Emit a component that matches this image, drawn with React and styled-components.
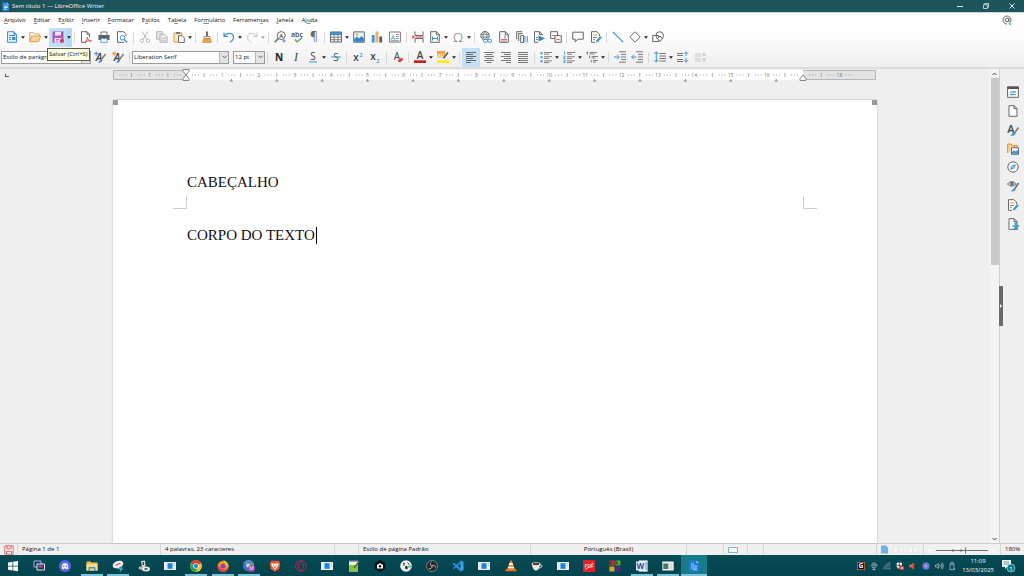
import React from "react";
import styled, { createGlobalStyle } from "styled-components";

const GlobalStyle = createGlobalStyle`
  * {
    box-sizing: border-box;
  }

  body {
    margin: 0;
    overflow: hidden;
    font-family: "Open Sans", "Noto Sans", sans-serif;
    font-size: 6px;
    color: #111;
  }

  button, select {
    font: inherit;
    color: inherit;
    margin: 0;
    padding: 0;
    border: 0;
    background: none;
  }

  svg {
    flex: none;
    overflow: visible;
  }
`;

const Window = styled.div`
  display: flex;
  flex-direction: column;
  height: 100vh;
  background: #efefef;
`;

/* ---------- title bar and menu ---------- */

const TitleBar = styled.header`
  display: flex;
  align-items: center;
  height: 12px;
  flex: none;
  padding-left: 1px;
  gap: 2px;
  background: #1d545c;
  color: #f0f6f6;
`;

const Title = styled.h1`
  flex: 1;
  margin: 0;
  font-size: 6px;
  line-height: 12px;
  font-weight: 400;
`;

const WindowButton = styled.button`
  display: flex;
  align-items: center;
  justify-content: center;
  width: 24px;
  height: 12px;
`;

const Chrome = styled.div`
  flex: none;
  background: linear-gradient(#ffffff 0, #fdfdfd 40%, #efefef 100%);
  border-top: 1px solid #c9d8da;
  border-bottom: 2px solid #dcdcdc;
`;

const MenuBar = styled.nav`
  display: flex;
  align-items: center;
  gap: 8px;
  height: 14px;
  padding: 0 12px 0 4px;
`;

const MenuItem = styled.button`
  line-height: 12px;
  white-space: nowrap;

  u {
    text-underline-offset: 1px;
    text-decoration-thickness: 1px;
    text-decoration-color: #888;
  }
`;

const UpdateButton = styled.button`
  display: flex;
  margin-left: auto;
`;

/* ---------- toolbars ---------- */

const ToolBar = styled.div`
  display: flex;
  align-items: center;
  height: ${(props) => props.$height}px;
  padding-left: ${(props) => props.$start}px;
`;

const ToolButton = styled.button`
  position: relative;
  display: flex;
  align-items: center;
  justify-content: center;
  flex: none;
  width: ${(props) => (props.$wide ? 18 : 17)}px;
  height: 19px;
  background: ${(props) => (props.$active ? "#c3dff6" : "none")};
`;

const DropButton = styled.button`
  display: flex;
  align-items: center;
  justify-content: center;
  flex: none;
  width: 6px;
  height: 19px;
  background: ${(props) => (props.$active ? "#b5d9f6" : "none")};
  opacity: ${(props) => (props.$off ? 0.4 : 1)};
`;

const Separator = styled.span`
  flex: none;
  width: 5px;
  height: 11px;
  background: linear-gradient(#d8d8d8, #d8d8d8) center / 1px 100% no-repeat;
`;

const Tooltip = styled.span`
  position: absolute;
  top: 20px;
  left: -2px;
  z-index: 2;
  height: 13px;
  padding: 0 1px;
  border: 1px solid #5a5a4c;
  background: #ffffe1;
  line-height: 11px;
  white-space: nowrap;
`;

const Combo = styled.label`
  position: relative;
  display: flex;
  flex: none;
  width: ${(props) => props.$width}px;
  height: 13px;
  margin-right: ${(props) => props.$gap || 0}px;
  border: 1px solid #9b9b9b;
  background: #fff;

  select {
    flex: 1;
    min-width: 0;
    appearance: none;
    padding-left: 1px;
    line-height: 11px;
    outline: none;
  }
`;

const ComboArrow = styled.span`
  display: flex;
  align-items: center;
  justify-content: center;
  width: 9px;
  border-left: 1px solid #b4b4b4;
  background: #e4e4e4;
`;

/* ---------- document area ---------- */

const Work = styled.div`
  display: flex;
  flex: 1;
  min-height: 0;
`;

const DocumentColumn = styled.main`
  position: relative;
  display: flex;
  flex: 1;
  flex-direction: column;
  align-items: center;
  min-width: 0;
`;

const TabCorner = styled.span`
  position: absolute;
  top: 5px;
  left: 5px;
  width: 4px;
  height: 3px;
  border-left: 1px solid #555;
  border-bottom: 1px solid #555;
`;

const Page = styled.article`
  position: relative;
  flex: 1;
  width: 764px;
  max-width: 100%;
  margin-top: 18px;
  padding: 73px 60px 0;
  background: #fff;
  box-shadow: 0 0 2px #b5b5b5;
  color: #111;
  font-family: "Liberation Serif", serif;
  font-size: 15px;
  line-height: 18px;
`;

const PageHandle = styled.span`
  position: absolute;
  top: 0;
  ${(props) => props.$side}: 0;
  width: 5px;
  height: 5px;
  background: #999;
`;

const Paragraph = styled.p`
  margin: 0;
  padding: 0 14px;
`;

const HeaderMarks = styled.div`
  display: flex;
  justify-content: space-between;
  margin: 5px 0 17px;
`;

const CornerMark = styled.span`
  width: 14px;
  height: 13px;
  border-bottom: 1px solid #cfcfcf;
  border-${(props) => props.$edge}: 1px solid #cfcfcf;
`;

const Caret = styled.span`
  display: inline-block;
  width: 1px;
  height: 17px;
  margin-left: 1px;
  background: #000;
  vertical-align: -4px;
`;

const ScrollBar = styled.div`
  display: flex;
  flex-direction: column;
  align-items: center;
  width: 9px;
  background: #f4f4f4;

  button {
    display: flex;
    align-items: center;
    justify-content: center;
    height: 9px;
  }
`;

const ScrollTrack = styled.div`
  flex: 1;
  width: 100%;
`;

const ScrollThumb = styled.div`
  height: 41%;
  margin-left: 1px;
  background: #c9c9c9;
`;

const SideBar = styled.aside`
  position: relative;
  display: flex;
  flex-direction: column;
  align-items: center;
  width: 25px;
  padding: 14px 0 0 2px;
  border-left: 1px solid #cfcfcf;
`;

const SideButton = styled.button`
  display: flex;
  align-items: center;
  justify-content: center;
  width: 19px;
  flex: 0 1 19px;
`;

const SideDeck = styled.div`
  display: flex;
  flex-direction: column;
  height: 150px;
`;

const SideHandle = styled.button`
  position: absolute;
  top: calc(50% - 20px);
  left: -1px;
  width: 4px;
  height: 40px;
  background: #6a6a6a;

  svg {
    display: block;
  }
`;

/* ---------- status bar ---------- */

const StatusBar = styled.footer`
  display: flex;
  flex: none;
  height: 12px;
  border-top: 1px solid #cdcdcd;
  background: #f0f0f0;
  line-height: 11px;
`;

const StatusCell = styled.div`
  display: flex;
  align-items: center;
  justify-content: ${(props) => (props.$center ? "center" : "flex-start")};
  flex: ${(props) => (props.$grow ? "1 1" : "0 1")} ${(props) => props.$width}px;
  min-width: 0;
  padding-left: ${(props) => (props.$center ? 0 : 4)}px;
  border-right: 1px solid #d6d6d6;
  white-space: nowrap;

  &:last-child {
    border-right: 0;
  }
`;

/* ---------- taskbar ---------- */

const TaskBar = styled.div`
  display: flex;
  flex: none;
  justify-content: space-between;
  height: 21px;
  background: linear-gradient(#064b54, #03434e);
  color: #f4fafa;
`;

const Apps = styled.div`
  display: flex;
  flex: 0 1 707px;
`;

const AppButton = styled.button`
  display: flex;
  flex: 1;
  align-items: center;
  justify-content: center;
  background-color: ${(props) => (props.$active ? "#177c8a" : "transparent")};
  background-image: ${(props) =>
    props.$open ? "linear-gradient(#79c3d4, #79c3d4)" : "none"};
  background-position: bottom;
  background-size: ${(props) => (props.$active ? "100%" : "22px")} 2px;
  background-repeat: no-repeat;
`;

const Tray = styled.div`
  display: flex;
  align-items: center;
  padding-right: 9px;
`;

const TrayButton = styled.button`
  display: flex;
  align-items: center;
  justify-content: center;
  width: 13px;
`;

const Clock = styled.time`
  margin: 0 8px 0 4px;
  text-align: center;
  line-height: 9px;
`;

/* ---------- drawings ---------- */

const Icon = ({ size = 12, children }) => (
  <svg
    width={size}
    height={size}
    viewBox="0 0 12 12"
    fill="none"
    stroke="#666"
    aria-hidden="true"
  >
    {children}
  </svg>
);

const Letter = ({ x = 6, y = 10, size = 11, color = "#444", children, ...props }) => (
  <text x={x} y={y} fontSize={size} fill={color} stroke="none" textAnchor="middle" {...props}>
    {children}
  </text>
);

const BLUE = "#3a94d6";

const icons = {
  writer: (
    <g stroke="none">
      <path d="M2 .5h6l2.500 2.500v8.500H2z" fill="#2f8fe0" />
      <path d="M8 .5v2.500h2.500z" fill="#a8d5fa" />
      <path d="M4 5h5v1H4zM4 7h5v1H4zM4 9h3v1H4z" fill="#fff" />
    </g>
  ),
  newDoc: (
    <>
      <path d="M1.500 .7h6.300l2.700 2.700v7.900h-9z" fill="#e3f1fc" stroke={BLUE} />
      <path d="M3 4.500h6M3 6.500h2M3 8.500h2" stroke={BLUE} />
      <path d="M7.500 .7v3h3zM6 6h3.500v3H6z" fill={BLUE} stroke="none" />
    </>
  ),
  open: (
    <>
      <path d="M.7 10.500V1.700h3.600l1 1.300h5v2" stroke="#e3a14f" />
      <path d="M.7 10.700l2-5.700h9l-2 5.700z" fill="#fbd597" stroke="#e3a14f" />
    </>
  ),
  save: (
    <>
      <path d="M.5 .5h11v11H.5z" fill="#ab5bb6" stroke="none" />
      <path d="M3 1h6v3.500H3zM2.500 7h7v4.500h-7z" fill="#f3e6f5" stroke="none" />
      <path d="M4 8.500h3M4 10h2" stroke="#ab5bb6" strokeWidth=".8" />
      <circle cx="9.800" cy="9.800" r="2.100" fill="#e0355c" stroke="none" />
    </>
  ),
  pdf: (
    <>
      <path d="M9.500 6V3.200L7 .7H1.500v10.600H6" fill="#fff" />
      <path d="M7 .7v2.600h2.500" />
      <path d="M4.500 11.300c2-1 3-3 3-5.300 0 3 1.500 4 4 4-3-.5-5 0-7 1.300z" stroke="#e05256" />
    </>
  ),
  print: (
    <>
      <path d="M3 4V1h6v3" fill="#fff" stroke="#777" />
      <path d="M.5 4h11v5H.5z" fill="#5d6166" stroke="none" />
      <path d="M2.800 7.500h6.400v3.800H2.800z" fill="#fff" stroke={BLUE} strokeWidth=".8" />
    </>
  ),
  preview: (
    <>
      <path d="M10 5V3.200L7.500 .7h-6v10.600H8" fill="#fff" />
      <circle cx="6.500" cy="6.700" r="2.300" stroke={BLUE} />
      <path d="M8.200 8.500l3 3" stroke={BLUE} strokeWidth="1.400" />
    </>
  ),
  cut: (
    <g stroke="#b9b9b9">
      <path d="M3 .5l5 8M9 .5l-5 8" />
      <circle cx="3" cy="9.700" r="1.600" />
      <circle cx="9" cy="9.700" r="1.600" />
    </g>
  ),
  copy: (
    <g stroke="#b3b3b3" fill="#e9e9e9">
      <path d="M.7 .7h5.500v7.500H.7z" />
      <path d="M4 3.200h4.500l2.600 2.600v5.500H4z" />
      <path d="M5.500 7.500h4M5.500 9.500h4" strokeWidth=".7" />
    </g>
  ),
  paste: (
    <>
      <path d="M6 11H1V2h8v2" stroke="#e0953c" fill="#fdeacb" />
      <path d="M3 1h4v2H3z" fill="#777" stroke="none" />
      <path d="M5.500 4.700h3.600l2.200 2.200v4.500H5.500z" fill="#fff" />
    </>
  ),
  brush: (
    <>
      <path d="M6 .5v5" stroke="#7b6a5a" strokeWidth="2" />
      <path d="M3 5.500h6v2H3z" fill="#fff" stroke="#a58a6c" />
      <path d="M2.500 8h7l1 3.500h-9z" fill="#f0a04b" stroke="#d98e3e" strokeWidth=".7" />
    </>
  ),
  undo: <path d="M1 1.500v4h4M1.300 5.300C4 1 10.500 1.500 10.500 6.300c0 2.500-1.700 4-3.700 5" stroke={BLUE} strokeWidth="1.200" />,
  redo: <path d="M11 1.500v4H7M10.700 5.300C8 1 1.500 1.500 1.500 6.300c0 2.500 1.700 4 3.700 5" stroke="#c4c4c4" />,
  find: (
    <>
      <circle cx="7.200" cy="4.600" r="4" />
      <path d="M4.500 7.300L.8 11.200" strokeWidth="1.500" />
      <Letter x={7.2} y={6.800} size={6} fontWeight="600">A</Letter>
      <path d="M8.300 10h3.500M10 8.500v3" stroke={BLUE} />
    </>
  ),
  spell: (
    <>
      <Letter y={5.500} size={7} fontWeight="600">abc</Letter>
      <path d="M4 8.500l2.200 2.500L11 6.500" stroke="#3fa45b" strokeWidth="1.200" />
    </>
  ),
  pilcrow: <Letter size={12} color="#6a6a6a">¶</Letter>,
  table: (
    <>
      <path d="M.5 1h11v10H.5z" fill="#fff" stroke="#5d6770" />
      <path d="M.5 1h11v2.500H.5z" fill={BLUE} stroke="none" />
      <path d="M.5 3.700h11M.5 6.200h11M.5 8.700h11M4.200 3.500V11M7.900 3.500V11" stroke="#5d6770" strokeWidth=".8" />
    </>
  ),
  image: (
    <>
      <path d="M.7 .9h10.600v10.300H.7z" fill="#eaf4fc" stroke="#5b6873" />
      <path d="M1.200 10.700V8L4 5.500l2 2L8.500 5l2.300 2.500v3.200z" fill="#3286c4" stroke="none" />
      <circle cx="4" cy="3.600" r="1.200" fill="#f0a04b" stroke="none" />
    </>
  ),
  chart: (
    <g stroke="none">
      <path d="M.8 4h2.800v7.500H.8z" fill={BLUE} />
      <path d="M4.500 .5h2.800v11H4.500z" fill="#f3b24f" />
      <path d="M8.300 5.500h2.800v6H8.300z" fill="#5a5f63" />
    </g>
  ),
  textBox: (
    <>
      <path d="M.6 1h10.800v10H.6z" fill="#fff" stroke="#777" />
      <Letter x={4} y={8.500} size={7} color={BLUE}>A</Letter>
      <path d="M7 3.500h3M7 5.500h3M7 7.500h3M2 9.700h8" strokeWidth=".7" />
    </>
  ),
  pageBreak: (
    <>
      <path d="M3 .5v4h8V.5M3 11.500v-4h8v4" />
      <path d="M3.500 6H12M0 6h2" stroke="#d8484c" />
      <path d="M.5 4l2.500 2-2.500 2z" fill="#d8484c" stroke="none" />
    </>
  ),
  field: (
    <>
      <path d="M1.700 .7h5.800l2.800 2.800v7.800H1.700z" fill="#fff" />
      <path d="M7.300 .7v3h3" />
      <path d="M3.500 5.500v4M8.500 5.500v4M3.500 7.500h5" stroke={BLUE} />
    </>
  ),
  omega: <Letter y={10.500} size={13} color="#6a6a6a" fontWeight="300">Ω</Letter>,
  link: (
    <>
      <circle cx="5" cy="4.700" r="4.200" />
      <path d="M.8 3.300h8.400M.8 6h8.400M5 .5c-2.500 2.500-2.500 6 0 8.400M5 .5c2.500 2.500 2.500 6 0 8.400" strokeWidth=".8" />
      <rect x="3.500" y="8.300" width="4" height="3" rx="1.500" stroke={BLUE} fill="#fff" />
      <rect x="7.700" y="8.300" width="4" height="3" rx="1.500" stroke={BLUE} fill="#fff" />
    </>
  ),
  footnote: (
    <>
      <path d="M1.700 .7h5.800l2.800 2.800v7.800H1.700z" fill="#fff" />
      <path d="M7.300 .7v3h3M7 4.500v3" />
      <path d="M3 8.500h6M3 10h6" stroke="#e06a6d" />
    </>
  ),
  endnote: (
    <>
      <path d="M.7 8.500V.7h5.500M2.700 10V2.500h4" />
      <path d="M4.700 4.500h2.800v7H4.700z" fill="#fff" />
      <path d="M9 5v6.500M11.300 5v6.500" stroke={BLUE} />
    </>
  ),
  bookmark: (
    <>
      <path d="M9.300 4V3.500L6.500 .7H1.500v10.600H5M6.500 .7v3h3" fill="#fff" />
      <path d="M5.500 4.500l6.500 3-6.500 3z" fill="#2f87c8" stroke="none" />
      <path d="M3 6.500h2M3 8.500h2" strokeWidth=".8" />
    </>
  ),
  crossRef: (
    <>
      <path d="M.7 .7h6.800v6.800H.7z" fill="#fff" />
      <path d="M5 4.700h6.300v6.600H5z" fill="#fff" />
      <path d="M2 4.500h4M6.500 8.500h3.300" stroke="#e06a6d" />
    </>
  ),
  comment: <path d="M.7 1.200h10.600v7H5.700L3.200 11V8.200H.7z" fill="#fff" />,
  track: (
    <>
      <path d="M9.500 5V3.200L7 .7H1.500v10.600H5" fill="#fff" />
      <path d="M3 4h4.500" stroke="#e0953c" />
      <path d="M3 6.500h4M3 8.700h2" strokeWidth=".8" />
      <path d="M6 11.500l.6-2.400L10.200 5l1.600 1.500-3.600 4.300z" fill={BLUE} stroke="none" />
    </>
  ),
  line: <path d="M.8 .8l10.400 10.400" stroke={BLUE} strokeWidth="1.200" />,
  diamond: <path d="M6 .8L11.200 6 6 11.200.8 6z" fill="#fff" />,
  shapes: (
    <>
      <path d="M.7 4.500h5.800v6H.7z" fill="#fff" />
      <circle cx="7.700" cy="4.500" r="3.800" />
      <path d="M5.500 7.700L8 5l2.500 2.700L8 10.500z" fill="#fff" />
    </>
  ),
  newStyle: (
    <>
      <Letter x={5} y={10} size={11} fontWeight="600" fontStyle="italic">A</Letter>
      <path d="M11.500 3L7.500 8.500" stroke="#777" strokeWidth="1.400" />
      <path d="M4 11.500c2 .5 4-.3 4.200-2L6.500 8.500z" fill={BLUE} stroke="none" />
      <path d="M0 2.500h4.500M2.200 .3v4.500" stroke={BLUE} />
    </>
  ),
  editStyle: (
    <>
      <Letter x={5} y={10} size={11} fontWeight="600" fontStyle="italic">A</Letter>
      <path d="M11.500 3L7.500 8.500" stroke="#777" strokeWidth="1.400" />
      <path d="M4 11.500c2 .5 4-.3 4.200-2L6.500 8.500z" fill={BLUE} stroke="none" />
      <path d="M0 2.500h4.400M2.200 .3v4.400M.7 1l3 3M3.700 1l-3 3" stroke="#f0933a" strokeWidth=".8" />
    </>
  ),
  bold: <Letter size={10} fontWeight="700" color="#222">N</Letter>,
  italic: <Letter fontFamily="Liberation Serif" fontStyle="italic" size={12}>I</Letter>,
  underline: (
    <>
      <Letter y={9} size={10}>S</Letter>
      <path d="M2 11h8" stroke={BLUE} />
    </>
  ),
  strike: (
    <>
      <Letter y={9.500} size={10}>S</Letter>
      <path d="M1 6h10" stroke={BLUE} />
    </>
  ),
  superscript: (
    <>
      <Letter x={4} size={10} fontWeight="600">x</Letter>
      <Letter x={9} y={6} size={6} color={BLUE} fontWeight="600">2</Letter>
    </>
  ),
  subscript: (
    <>
      <Letter x={4} y={9} size={10} fontWeight="600">x</Letter>
      <Letter x={9} y={11.500} size={6} color={BLUE} fontWeight="600">2</Letter>
    </>
  ),
  clear: (
    <>
      <Letter x={5} y={9} size={10}>A</Letter>
      <path d="M5.500 10l4-3.500 2 2-3.700 3z" fill="#dc3b4a" stroke="none" />
    </>
  ),
  fontColor: (
    <>
      <Letter y={8} size={10} fontWeight="600">A</Letter>
      <path d="M0 9.300h12v2.700H0z" fill="#c9211e" stroke="none" />
    </>
  ),
  highlight: (
    <>
      <path d="M0 0h8v6.500H0z" fill="#f7a13b" stroke="none" />
      <Letter x={4} y={5.500} size={6} color="#fff">ab</Letter>
      <path d="M11 1.500L6.500 7.300" stroke="#5a5a5a" strokeWidth="1.600" />
      <path d="M0 9.300h12v2.700H0z" fill="#ffee00" stroke="none" />
    </>
  ),
  alignLeft: <path d="M1 1.500h10M1 3.500h7M1 5.500h10M1 7.500h7M1 9.500h10M1 11.500h5" stroke="#585858" strokeWidth=".9" />,
  alignCenter: <path d="M1 1.500h10M2.500 3.500h7M1 5.500h10M2.500 7.500h7M1 9.500h10M3.500 11.500h5" stroke="#6a6a6a" strokeWidth=".9" />,
  alignRight: <path d="M1 1.500h10M4 3.500h7M1 5.500h10M4 7.500h7M1 9.500h10M6 11.500h5" stroke="#6a6a6a" strokeWidth=".9" />,
  justify: <path d="M1 1.500h10M1 3.500h10M1 5.500h10M1 7.500h10M1 9.500h10M1 11.500h10" stroke="#6a6a6a" strokeWidth=".9" />,
  bullets: (
    <>
      <path d="M4 1.500h8M4 3.200h5M4 5.700h8M4 7.400h5M4 9.900h8M4 11.600h5" strokeWidth=".8" />
      <path d="M.5 1.300h2v2h-2zM.5 5.300h2v2h-2zM.5 9.300h2v2h-2z" fill={BLUE} stroke="none" />
    </>
  ),
  numbering: (
    <>
      <path d="M4 1.500h8M4 3.200h5M4 5.700h8M4 7.400h5M4 9.900h8M4 11.600h5" strokeWidth=".8" />
      <path d="M1.500 .5v3M.5 5h1.500v1.300H.7v1.200h1.600M.5 9h1.600v2.500H.5M.5 10.200h1.500" stroke={BLUE} strokeWidth=".8" />
    </>
  ),
  outline: (
    <>
      <path d="M3.500 1.500H11M5.500 5.500H12M7 9.500h5M3.500 3h5M5.500 7h4M7 11h3" strokeWidth=".8" />
      <path d="M1.500 .5v3M.5 1.500h1M3.500 4.500v3M5.200 9v2.500" stroke={BLUE} />
    </>
  ),
  indent: (
    <>
      <path d="M5 .8h7M7 3.400h5M7 6h5M7 8.600h5M5 11.200h7" strokeWidth=".9" />
      <path d="M0 6h5M3 3.700L5.300 6 3 8.300" stroke={BLUE} />
    </>
  ),
  outdent: (
    <>
      <path d="M5 .8h7M7 3.400h5M7 6h5M7 8.600h5M5 11.200h7" strokeWidth=".9" />
      <path d="M.5 6h5M3 3.700L.7 6 3 8.300" stroke={BLUE} />
    </>
  ),
  lineSpacing: (
    <>
      <path d="M5.500 2.500H12M5.500 5H12M5.500 7.500H12M5.500 10H12" strokeWidth=".9" />
      <path d="M2.300 .8v10.400M.3 3l2-2.200 2 2.200M.3 9l2 2.200 2-2.200" stroke={BLUE} />
    </>
  ),
  spaceMore: (
    <>
      <path d="M0 2.500h6M0 4.500h6M0 8.500h6M0 10.500h6" strokeWidth=".9" />
      <path d="M9 .8V5M7 2.800l2-2 2 2M9 7v4.200M7 9.200l2 2 2-2" stroke={BLUE} />
    </>
  ),
  spaceLess: (
    <g stroke="#c4c4c4">
      <path d="M0 3h6M0 5h6M0 8h6M0 10h6" strokeWidth=".9" />
      <path d="M9 .8V5M7 3l2 2 2-2M9 7v4.200M7 9l2-2 2 2" />
    </g>
  ),
  properties: (
    <>
      <path d="M.6 1h10.800v10.300H.6z" fill="#fff" />
      <path d="M.2 .5h11.600V3H.2z" fill="#555" stroke="none" />
      <path d="M3 6h6M3 8.500h6" stroke={BLUE} />
      <path d="M7 5v2M5 7.500v2" stroke={BLUE} />
    </>
  ),
  pageDeck: <path d="M2 .7h5.200L10 3.500v7.800H2zM7 .7v3h3" fill="#fff" />,
  styles: (
    <>
      <Letter x={4} y={9} size={11} fontWeight="600">A</Letter>
      <path d="M11.500 3.500L8 8.500" stroke="#777" strokeWidth="1.600" />
      <path d="M3.500 11.500c3 .8 5-.5 5.200-2.500L7 7.800z" fill={BLUE} stroke="none" />
    </>
  ),
  gallery: (
    <>
      <path d="M.7 10V1h3.500l1 1.500h5V4" stroke="#e8862e" fill="#fbd597" />
      <path d="M4.500 4.700h7v6.600h-7z" fill="#fff" stroke="#5b6873" />
      <path d="M5 10.800V9l2-1.700 1.500 1.200L10 7.300l1 1v2.500z" fill={BLUE} stroke="none" />
    </>
  ),
  navigator: (
    <>
      <circle cx="6" cy="6" r="5.200" fill="#fff" />
      <path d="M9 3L7.300 7.300 3 9l1.700-4.300z" fill={BLUE} stroke="none" />
      <circle cx="6" cy="6" r=".8" fill="#fff" stroke="none" />
    </>
  ),
  inspector: (
    <>
      <path d="M.5 4c2-3 6.500-3 8.500 0-2 2.700-6.500 2.700-8.500 0z" />
      <circle cx="4.800" cy="3.800" r="1.500" fill={BLUE} />
      <path d="M11.500 3L8 8.500" strokeWidth="1.500" />
      <path d="M4 11.300c2.500.8 4.500-.5 4.700-2.300L7.200 8z" fill={BLUE} stroke="none" />
    </>
  ),
  accessibility: (
    <>
      <path d="M2 .7h5.200L10 3.500v7.800H2zM7 .7v3h3" fill="#fff" />
      <circle cx="8.700" cy="5.700" r="1.300" fill={BLUE} stroke="none" />
      <path d="M5.500 8h6.500M8.700 8v1.500M8.700 9l-2 2.700M8.700 9l2 2.700" stroke={BLUE} strokeWidth="1.400" />
    </>
  ),
  update: (
    <>
      <circle cx="6" cy="6" r="2.200" strokeWidth="1.200" />
      <path d="M8.200 3.500v3.700c.3 1.500 2.500 1.300 2.600-1.200C10.700 3 8.500 1.200 6 1.200S1.200 3.300 1.200 6s2 4.800 4.800 4.800" strokeWidth="1.200" />
      <path d="M9.500 8v3.500M8 10l1.500 1.700L11 10" stroke={BLUE} />
    </>
  ),
  docModified: (
    <path d="M1 1h10v10H1zM3.500 1v3.500h5V1M3 11V7.500h6V11" stroke="#d8484c" fill="#fff" />
  ),
};

const apps = [
  { name: "Iniciar", art: <path d="M1 2.500l4.500-.7v4H1zM6.200 1.700L11 1v4.800H6.200zM1 6.500h4.500v4L1 9.800zM6.200 6.500H11v4.800l-4.800-.7z" fill="#fff" /> },
  { name: "Área de trabalho", art: (<><path d="M1 1h7v6H1z" fill="none" stroke="#b8a6e8" /><path d="M4 4h7.500v6H4z" fill="#1d2e63" stroke="#e2e6f5" /><path d="M5.500 5.500h4v2h-4z" fill="#d74a6c" /></>) },
  { name: "Discord", art: (<><circle cx="6" cy="6" r="6" fill="#5865f2" /><path d="M2.700 8.500c0-2 .5-4 1.300-5 1.300-.5 2.700-.5 4 0 .8 1 1.300 3 1.300 5-1 .7-1.500.8-2 .7L6.700 8.500H5.300l-.6.7c-.5.100-1 0-2-.7z" fill="#fff" /><circle cx="4.700" cy="6.400" r=".8" fill="#5865f2" /><circle cx="7.300" cy="6.400" r=".8" fill="#5865f2" /></>) },
  { name: "Explorador", open: true, art: (<><path d="M.5 1.500h4l1 1h6v8H.5z" fill="#f3c044" /><path d="M.5 4h11v6.500H.5z" fill="#fbdc7c" /><path d="M2.500 11V7h7v4H8V8.500H4V11z" fill="#3d94d8" /></>) },
  { name: "Ferramenta de captura", open: true, art: (<><ellipse cx="6" cy="4.500" rx="5.500" ry="3.500" transform="rotate(-20 6 4.500)" fill="#eef0f2" /><path d="M3.500 5.500l5-2.500" stroke="#d64545" strokeWidth="1.200" /><path d="M5 8l6 1.500M8 11.500l2-5" stroke="#67a9dc" strokeWidth="1.200" /></>) },
  { name: "Gravador", art: (<><path d="M3 1l4-.5.5 6L4 7z" fill="#d5d8da" /><path d="M4.500 2h1.500v3H4.500z" fill="#444" /><ellipse cx="3.500" cy="8" rx="3" ry="1.700" fill="#aeb5b8" /><ellipse cx="8" cy="9" rx="4" ry="2.500" fill="#e6e8e9" /><ellipse cx="8" cy="9" rx="1.700" ry=".9" fill="#555" /></>) },
  { name: "Painel", art: "panel" },
  { name: "Chrome", open: true, art: "chrome" },
  { name: "Firefox", open: true, art: (<><circle cx="6" cy="6.300" r="5.500" fill="#ff8a1f" /><path d="M6.500 .3c3 1 5.500 4 5 7-1-2-2-2.500-3-4-1-1-2-1.500-2-3z" fill="#ffcf33" /><path d="M.8 4C0 8 2.500 12 6.300 11.800 9 11.500 11 10 11.500 7.500 9 11 3 10.500.8 4z" fill="#f5345d" /><circle cx="6" cy="6.300" r="2.300" fill="#7b3fd6" /></>) },
  { name: "Chrome, perfil M", open: true, art: "chromeM" },
  { name: "Brave", art: (<><path d="M2.500 .7h7L11.300 3l-1 6L6 11.800 1.700 9l-1-6z" fill="#fb542b" /><path d="M3 3.200l3 .6 3-.6.8 1.500-2 3L6 9.500 4.200 7.700l-2-3z" fill="#fff" /><path d="M4.500 5l1.500 3 1.500-3" stroke="#fb542b" fill="none" strokeWidth=".8" /></>) },
  { name: "Opera GX", art: (<g fill="none" stroke="#b3284d"><circle cx="6" cy="6" r="5.300" /><ellipse cx="6" cy="6" rx="2.300" ry="4.800" /></g>) },
  { name: "Painel 2", art: "panel" },
  { name: "Notepad++", art: (<><path d="M1 1h9v10.500H1z" fill="#eef3e8" /><path d="M1 5h9v6.500H1z" fill="#8cc63f" /><path d="M1 .5h9v1.300H1z" fill="#8b8f93" /><path d="M11.500 1L6 8" stroke="#4c5a33" strokeWidth="1.300" /></>) },
  { name: "Câmera", art: (<><path d="M6 0l5.200 3v6L6 12 .8 9V3z" fill="#101014" /><path d="M3 4.500h1.500L5 3.500h2l.5 1H9v4H3z" fill="#fff" /><circle cx="6" cy="6.300" r="1.200" fill="#101014" /></>) },
  { name: "DeaDBeeF", art: (<><circle cx="6" cy="6" r="5.800" fill="#eef2ef" /><path d="M3 3l2 1M7.500 2.500l2 2" stroke="#222" /><path d="M5 8.500c0-2 .5-3 2-2.500 1 1 1 2 .2 3.500z" fill="#2a2a2a" /><circle cx="4" cy="5" r=".8" fill="#222" /><path d="M8 5.500h3v2H8z" fill="#5bb4a8" /></>) },
  { name: "OBS Studio", art: (<><circle cx="6" cy="6" r="5.500" fill="#26252a" stroke="#8d9294" strokeWidth=".8" /><g fill="none" stroke="#c3c7c9" strokeWidth=".9"><path d="M6 6a2 2 0 0 1-.5-3.800M6 6a2 2 0 0 1 3.500 1.500M6 6a2 2 0 0 1-3 2.300" /></g></>) },
  { name: "VS Code", art: (<><path d="M8.500 .5L11.500 2v8l-3 1.500z" fill="#3aa6ef" /><path d="M8.500 .5v3.300L2 9.300.7 8.200z" fill="#1f7fcb" /><path d="M8.500 11.500V8.200L2 2.700.7 3.800z" fill="#2b93df" /></>) },
  { name: "Painel 3", art: "panel" },
  { name: "VLC", art: (<><path d="M5.200 .5h1.600L10 10H2z" fill="#f58220" /><path d="M4.400 3.200h3.200l.6 1.800H3.800zM3.200 6.700h5.600l.5 1.600H2.700z" fill="#fff" /><path d="M.8 9.300h10.400l.5 2H.3z" fill="#e8761a" /></>) },
  { name: "Café", art: (<><path d="M1 4h8c0 4-2 6.500-4 6.500S1 8 1 4z" fill="#e8e4de" /><ellipse cx="5" cy="4" rx="4.500" ry="1.800" fill="#fff" /><ellipse cx="5" cy="4" rx="3.500" ry="1.200" fill="#5a3a26" /><path d="M9 5c3-.5 2.500 3-1 3" stroke="#e8e4de" fill="none" /></>) },
  { name: "Painel 4", art: "panel" },
  { name: "Leitor de PDF", art: (<><path d="M0 0h12v12H0z" fill="#e1202b" /><text x="6" y="7.500" fontSize="5" textAnchor="middle" fill="#fff">PDF</text><path d="M2 9.500c3-1 6-4 8-7" stroke="#fff" strokeWidth=".7" fill="none" /></>) },
  { name: "Blocos", art: (<><path d="M.5 .5h5v5h-5z" fill="#c9302c" /><path d="M6.500 .5h5v5h-5z" fill="#5fa52c" /><path d="M.5 6.500h5v5h-5z" fill="#d9a41e" /><path d="M6.500 6.500h5v5h-5z" fill="#4c2a9c" /><path d="M1.500 1.500h1v3h-1zM7.500 1.500h1v3h-1z" fill="#222" /></>) },
  { name: "Word", open: true, art: (<><path d="M3 .5h8.500v11H3z" fill="#f4f7fb" stroke="#9cb3d6" strokeWidth=".6" /><path d="M9 3h2M9 5h2M9 7h2M9 9h2" stroke="#2b579a" strokeWidth=".7" /><path d="M0 1.500h8.500v9H0z" fill="#dfe9f8" /><text x="4.300" y="9" fontSize="8" fontWeight="700" textAnchor="middle" fill="#1f4fa3">W</text></>) },
  { name: "Visualizador", open: true, art: (<><path d="M.3 1.500h11.400v9H.3z" fill="#eef0f0" /><path d="M1.300 3.500h5v5.500h-5z" fill="#3f7b6b" /><path d="M7.500 4h3M7.500 6h3M7.500 8h3" stroke="#a8b4b4" strokeWidth=".7" /></>) },
  { name: "LibreOffice Writer", open: true, active: true, art: (<><path d="M1 .5h7.500L11 3v8.500H1z" fill="#1f7ddd" /><path d="M8.500 .5V3H11z" fill="#9bd0fa" /><path d="M3 4h3M3 6h6M3 8h6M5 9.700h4" stroke="#bfe2ff" strokeWidth=".8" /></>) },
];

const shared = {
  panel: (
    <>
      <path d="M0 2h12v8H0z" fill="#e9edf0" />
      <path d="M3.500 3.200h5v5.600h-5z" fill="#1d7fe0" />
      <path d="M9.500 3.500h1.500M9.500 5.500h1.500" stroke="#9aa" strokeWidth=".6" />
    </>
  ),
  chrome: (
    <>
      <circle cx="6" cy="6" r="6" fill="#fbc116" />
      <path d="M6 6L.8 3A6 6 0 0 1 11.200 3z" fill="#e33b2e" />
      <path d="M6 6L.8 3a6 6 0 0 0 4.700 9L8.500 7z" fill="#2ba24c" />
      <circle cx="6" cy="6" r="2.800" fill="#fff" />
      <circle cx="6" cy="6" r="2.200" fill="#3b7ded" />
    </>
  ),
  chromeM: (
    <>
      <circle cx="5.500" cy="5.500" r="5.500" fill="#8aa34c" />
      <path d="M5.500 5.500L.7 2.700a5.500 5.500 0 0 1 9.600 0z" fill="#4f86d9" />
      <path d="M5.500 5.500L.7 2.700A5.500 5.500 0 0 0 5 11z" fill="#3b6fc4" />
      <circle cx="5" cy="5.500" r="2" fill="#c9d8f2" />
      <circle cx="8.500" cy="8.500" r="3.500" fill="#a043b8" />
      <text x="8.500" y="10.200" fontSize="5" textAnchor="middle" fill="#fff">M</text>
    </>
  ),
};

const tray = [
  { name: "Logitech G", art: (<><path d="M0 0h12v12H0z" fill="#e8824a" /><path d="M1 1h10v10H1z" fill="#060606" /><text x="6" y="9.500" fontSize="10" fontWeight="700" textAnchor="middle" fill="#fff">G</text></>) },
  { name: "Webcam", art: (<g fill="none" stroke="#c6d6d6"><rect x="3" y="1.500" width="6" height="7" rx="2" /><path d="M6 8.500v3M3.500 11.300h5M9 4.500h2.500" /><circle cx="6" cy="5" r="1.200" /></g>) },
  { name: "Rede", art: (<path d="M1 11C2 6 6 2 11 1M4 11c.5-3.500 3-6 7-7M7 11c.5-2 2-3.500 4-4M10 9v2.500" fill="none" stroke="#a5bfc2" />) },
  { name: "Segurança", art: (<><path d="M1 1.500L5 .5l4 1v4c0 2.500-2 4-4 5-2-1-4-2.500-4-5z" fill="#f3f3f3" /><path d="M5 .5v10M1 5h8" stroke="#222" /><path d="M6 6h6v6H6z" fill="#e03434" /><path d="M7.500 7.500l3 3M10.500 7.500l-3 3" stroke="#fff" /></>) },
  { name: "Áudio Realtek", art: (<><path d="M0 4h3l4-3.500v11L3 8H0z" fill="#e0613a" /><path d="M8.500 3.500v5" stroke="#8c2d20" strokeWidth="1.500" /></>) },
  { name: "Bluetooth", art: (<><circle cx="6" cy="6" r="5.500" fill="#4d7fd0" /><circle cx="6" cy="6" r="3.600" fill="#a54fb8" /><path d="M6 2.500v7M3 6h6" stroke="#9fe0f5" /></>) },
  { name: "Volume", art: (<g fill="none" stroke="#c6d6d6"><path d="M.7 4.500h2L5 2.300v7.400L2.700 7.500h-2z" /><path d="M7 4c1 1.200 1 2.800 0 4M9 2.500c2 2 2 5 0 7M10.700 1c2 3 2 7 0 10" /></g>) },
  { name: "Pendrive", art: (<g fill="none" stroke="#c6d6d6"><path d="M3 3.500h6v8H3zM4.200 3.500v-3h3.600v3M9.500 9v2.500" /></g>) },
];

const Drop = ({ label, ...props }) => (
  <DropButton aria-label={`Opções de ${label}`} {...props}>
    <svg width="4" height="3" viewBox="0 0 4 3" aria-hidden="true">
      <path d="M0 .3h4L2 2.800z" fill="#222" />
    </svg>
  </DropButton>
);

// "|" is a separator, "name v" has a drop-down beside it, "name +" is the wide size
const standardTools = [
  "newDoc v", "open v", "save v", "|", "pdf +", "print +", "preview +", "|",
  "cut", "copy", "paste v", "|", "brush", "|", "undo v", "redo v", "|",
  "find", "spell", "pilcrow", "|", "table v", "image +", "chart +", "textBox +", "|",
  "pageBreak", "field v", "omega v", "|", "link +", "footnote +", "endnote",
  "bookmark", "crossRef", "|", "comment +", "track", "|", "line", "diamond v", "shapes +",
];

const styleTools = ["newStyle +", "editStyle +", "|"];

const formatTools = [
  "|", "bold", "italic", "underline v", "strike", "|", "superscript",
  "subscript +", "|", "clear", "|", "fontColor v", "highlight v", "|",
  "alignLeft +", "alignCenter", "alignRight", "justify +", "|", "bullets v",
  "numbering v", "outline v", "|", "indent", "outdent +", "|", "lineSpacing v",
  "spaceMore +", "spaceLess +",
];

const Tools = ({ items }) =>
  items.map((item, index) => {
    if (item === "|") return <Separator key={index} />;
    const [name, flag] = item.split(" ");
    const active = name === "save" || name === "alignLeft";
    return (
      <React.Fragment key={index}>
        <ToolButton $wide={flag === "+"} $active={active} aria-label={name}>
          <Icon>{icons[name]}</Icon>
          {name === "save" && <Tooltip role="tooltip">Salvar (Ctrl+S)</Tooltip>}
        </ToolButton>
        {flag === "v" && (
          <Drop label={name} $active={active} $off={name === "redo"} />
        )}
      </React.Fragment>
    );
  });

const ComboBox = ({ label, value, width, gap }) => (
  <Combo $width={width} $gap={gap}>
    <select aria-label={label} defaultValue={value}>
      <option>{value}</option>
    </select>
    <ComboArrow>
      <svg width="5" height="4" viewBox="0 0 5 4" aria-hidden="true">
        <path d="M.5 .8l2 2 2-2" fill="none" stroke="#555" />
      </svg>
    </ComboArrow>
  </Combo>
);

const menus = [
  ["", "A", "rquivo"],
  ["", "E", "ditar"],
  ["E", "x", "ibir"],
  ["", "I", "nserir"],
  ["", "F", "ormatar"],
  ["E", "s", "tilos"],
  ["Ta", "b", "ela"],
  ["For", "m", "ulário"],
  ["Ferramen", "t", "as"],
  ["", "J", "anela"],
  ["Aj", "u", "da"],
];

const CM = 36.3;
const ORIGIN = 73;

const Ruler = () => {
  const quarters = Array.from({ length: 82 }, (_, i) => i - 8);
  const numbers = Array.from({ length: 20 }, (_, i) => i - 1);
  return (
    <svg width="764" height="13" viewBox="0 0 764 13" role="img" aria-label="Régua">
      <path d="M.5 1.500h762v9H.5z" fill="#e3e3e3" stroke="#b5b5b5" />
      <path d="M73 1h617v10H73z" fill="#fff" />
      {quarters.map((n) => {
        const x = ORIGIN + (n * CM) / 4;
        if (n % 4 === 0 || x < 4 || x > 759) return null;
        return n % 2 === 0 ? (
          <path key={n} d={`M${x} 4v4`} stroke="#999" strokeWidth=".8" />
        ) : (
          <path key={n} d={`M${x - 3} 6h1M${x} 6h1M${x + 3} 6h1`} stroke="#999" />
        );
      })}
      {numbers.map((n) =>
        n === 0 || n === 17 || n === 19 ? null : (
          <text
            key={n}
            x={ORIGIN + n * CM}
            y="8"
            fontSize="5"
            textAnchor="middle"
            fill="#777"
          >
            {Math.abs(n)}
          </text>
        )
      )}
      {Array.from({ length: 13 }, (_, i) => (
        <path
          key={i}
          d={`M${ORIGIN + (i + 1) * 45.400 - 1.500} 12h3M${ORIGIN + (i + 1) * 45.400} 10v2`}
          stroke="#777"
          strokeWidth=".8"
        />
      ))}
      <path d="M70 .5h6v2L73 6l-3-3.500zM70 11.500h6v-2L73 6l-3 3.500zM687 11.500h6v-2L690 6l-3 3.500z" fill="#f4f4f4" stroke="#888" />
    </svg>
  );
};

const App = () => (
  <Window>
    <GlobalStyle />
    <TitleBar>
      <Icon size={9}>{icons.writer}</Icon>
      <Title>Sem título 1 — LibreOffice Writer</Title>
      <WindowButton aria-label="Minimizar">
        <svg width="6" height="6" viewBox="0 0 6 6"><path d="M0 3.500h6" stroke="#dfe9e9" /></svg>
      </WindowButton>
      <WindowButton aria-label="Restaurar">
        <svg width="6" height="6" viewBox="0 0 6 6" fill="none" stroke="#dfe9e9">
          <path d="M.5 1.700h3.800v3.800H.5zM1.700 1.500V.5h3.800v3.800H4.500" strokeWidth=".8" />
        </svg>
      </WindowButton>
      <WindowButton aria-label="Fechar">
        <svg width="6" height="6" viewBox="0 0 6 6"><path d="M.5 .5l5 5M5.500 .5l-5 5" stroke="#dfe9e9" /></svg>
      </WindowButton>
    </TitleBar>

    <Chrome>
      <MenuBar>
        {menus.map(([before, key, after]) => (
          <MenuItem key={before + key + after}>
            {before}
            <u>{key}</u>
            {after}
          </MenuItem>
        ))}
        <UpdateButton aria-label="Atualização disponível">
          <Icon size={10}>{icons.update}</Icon>
        </UpdateButton>
      </MenuBar>
      <ToolBar $height={20} $start={3}>
        <Tools items={standardTools} />
      </ToolBar>
      <ToolBar $height={20} $start={1}>
        <ComboBox label="Estilo de parágrafo" value="Estilo de parágrafo Padrão" width={90} />
        <Tools items={styleTools} />
        <ComboBox label="Nome da fonte" value="Liberation Serif" width={97} gap={4} />
        <ComboBox label="Tamanho da fonte" value="12 pt" width={32} />
        <Tools items={formatTools} />
      </ToolBar>
    </Chrome>

    <Work>
      <DocumentColumn>
        <TabCorner />
        <Ruler />
        <Page>
          <PageHandle $side="left" />
          <PageHandle $side="right" />
          <Paragraph>CABEÇALHO</Paragraph>
          <HeaderMarks>
            <CornerMark $edge="right" />
            <CornerMark $edge="left" />
          </HeaderMarks>
          <Paragraph>
            CORPO DO TEXTO
            <Caret />
          </Paragraph>
        </Page>
      </DocumentColumn>
      <ScrollBar>
        <button aria-label="Rolar para cima">
          <svg width="5" height="4" viewBox="0 0 5 4"><path d="M.5 3l2-2 2 2" fill="none" stroke="#444" /></svg>
        </button>
        <ScrollTrack>
          <ScrollThumb />
        </ScrollTrack>
        <button aria-label="Rolar para baixo">
          <svg width="5" height="4" viewBox="0 0 5 4"><path d="M.5 1l2 2 2-2" fill="none" stroke="#444" /></svg>
        </button>
      </ScrollBar>
      <SideBar>
        <SideDeck>
          {["properties", "pageDeck", "styles", "gallery", "navigator", "inspector", "track", "accessibility"].map((name) => (
            <SideButton key={name} aria-label={name}>
              <Icon>{icons[name]}</Icon>
            </SideButton>
          ))}
        </SideDeck>
        <SideHandle aria-label="Ocultar barra lateral">
          <svg width="4" height="4" viewBox="0 0 4 4"><path d="M1 0l2 2-2 2z" fill="#fff" /></svg>
        </SideHandle>
      </SideBar>
    </Work>

    <StatusBar>
      <StatusCell $width={18}><Icon size={10}>{icons.docModified}</Icon></StatusCell>
      <StatusCell $width={143}>Página 1 de 1</StatusCell>
      <StatusCell $width={174}>4 palavras, 23 caracteres</StatusCell>
      <StatusCell $width={24} />
      <StatusCell $width={172}>Estilo de página Padrão</StatusCell>
      <StatusCell $width={156} $center $grow>Português (Brasil)</StatusCell>
      <StatusCell $width={37} />
      <StatusCell $width={24}>
        <svg width="10" height="6" viewBox="0 0 10 6"><path d="M.5 .5h9v5h-9z" fill="#fff" stroke="#7fb6d6" /></svg>
      </StatusCell>
      <StatusCell $width={16} />
      <StatusCell $width={113} />
      <StatusCell $width={47}>
        <svg width="40" height="9" viewBox="0 0 40 9">
          <path d="M0 .5h5l2 2v6H0z" fill="#6fb1ea" />
          <path d="M12.500 1.500h4v6h-4zM18.500 1.500h4v6h-4zM27.500 1.500h4v6h-4zM32.500 1.500h4v6h-4z" fill="#f6f6f6" stroke="#e9e9e9" />
        </svg>
      </StatusCell>
      <StatusCell $width={77} $center>
        <svg width="68" height="8" viewBox="0 0 68 8">
          <path d="M8 4.500h52M25 3v3M33 3v3M37.500 1.500v6" stroke="#6e6e6e" />
          <path d="M0 4.500h4M64 4.500h4M66 2.500v4" stroke="#fff" />
        </svg>
      </StatusCell>
      <StatusCell $width={23}>180%</StatusCell>
    </StatusBar>

    <TaskBar>
      <Apps>
        {apps.map((app) => (
          <AppButton key={app.name} $open={app.open} $active={app.active} aria-label={app.name}>
            <svg width="12" height="12" viewBox="0 0 12 12" aria-hidden="true">
              {shared[app.art] || app.art}
            </svg>
          </AppButton>
        ))}
      </Apps>
      <Tray>
        {tray.map((item) => (
          <TrayButton key={item.name} aria-label={item.name}>
            <svg width="8" height="8" viewBox="0 0 12 12" aria-hidden="true">{item.art}</svg>
          </TrayButton>
        ))}
        <Clock>
          11:09
          <br />
          13/03/2025
        </Clock>
        <TrayButton aria-label="Notificações">
          <svg width="13" height="13" viewBox="0 0 13 13">
            <path d="M0 1h9v7H5L3 10V8H0z" fill="#f4f8f8" />
            <path d="M1.500 3h6M1.500 5h6" stroke="#4b7f86" strokeWidth=".8" />
            <circle cx="9" cy="9" r="4" fill="#0f7c83" stroke="#cfe5e6" strokeWidth=".6" />
            <text x="9" y="11.500" fontSize="6" textAnchor="middle" fill="#fff">1</text>
          </svg>
        </TrayButton>
      </Tray>
    </TaskBar>
  </Window>
);

export default App;
